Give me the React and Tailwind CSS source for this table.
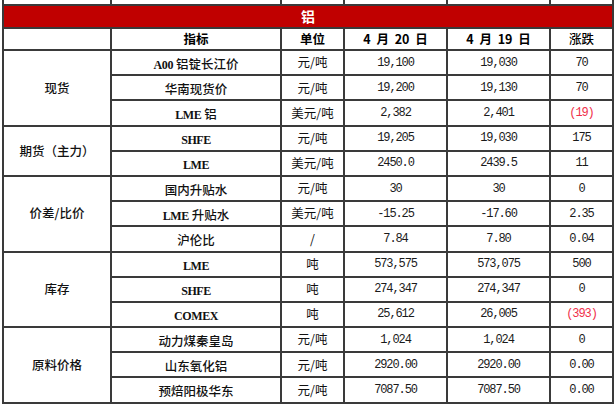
import React from "react";

const rows = [
  ["A00 铝锭长江价", "元/吨", "19,100", "19,030", "70"],
  ["华南现货价", "元/吨", "19,200", "19,130", "70"],
  ["LME 铝", "美元/吨", "2,382", "2,401", "(19)", true],
  ["SHFE", "元/吨", "19,205", "19,030", "175"],
  ["LME", "美元/吨", "2450.0", "2439.5", "11"],
  ["国内升贴水", "元/吨", "30", "30", "0"],
  ["LME 升贴水", "美元/吨", "-15.25", "-17.60", "2.35"],
  ["沪伦比", "/", "7.84", "7.80", "0.04"],
  ["LME", "吨", "573,575", "573,075", "500"],
  ["SHFE", "吨", "274,347", "274,347", "0"],
  ["COMEX", "吨", "25,612", "26,005", "(393)", true],
  ["动力煤秦皇岛", "元/吨", "1,024", "1,024", "0"],
  ["山东氧化铝", "元/吨", "2920.00", "2920.00", "0.00"],
  ["预焙阳极华东", "元/吨", "7087.50", "7087.50", "0.00"],
];

const cjk = "[font-family:'Noto_Sans_CJK_SC',sans-serif]";
const cell = "bg-white flex items-center justify-center overflow-hidden leading-none";
const groupCell = `${cell} ${cjk} font-medium text-[12.5px] text-[#111] col-start-1`;

function Mixed({ text }) {
  const parts = text.split(/([A-Za-z0-9]+)/).filter((p) => p !== "");
  return (
    <span className="whitespace-pre">
      {parts.map((p, i) =>
        /^[A-Za-z0-9]+$/.test(p) ? (
          <span key={i} className="[font-family:'Liberation_Serif',serif] font-bold text-[12px] tracking-[-0.4px]">
            {p}
          </span>
        ) : (
          <span key={i} className={`${cjk} font-medium text-[12.5px]`}>
            {p}
          </span>
        )
      )}
    </span>
  );
}

function Num({ v, red }) {
  return (
    <span
      className={`[font-family:'Liberation_Mono',monospace] text-[12px] tracking-[-1.1px] whitespace-pre ${
        red ? "text-[#f0304a]" : "text-[#1a1a1a]"
      }`}
    >
      {v}
    </span>
  );
}

export default function App() {
  return (
    <div className="w-[615px] h-[412px] bg-white overflow-hidden">
      <div className="ml-[2px] mt-[-17px] w-[612px] bg-[#3a3a3a] p-[2px] grid gap-[2px] grid-cols-[106px_168px_61px_101px_101px_61px] grid-rows-[19px_21px_20px_repeat(14,23.2px)]">
        {/* partial top row */}
        <div className="bg-white" />
        <div className="bg-white" />
        <div className="bg-white" />
        <div className="bg-white" />
        <div className="bg-white" />
        <div className="bg-white" />
        {/* red title */}
        <div className={`col-span-6 bg-[#c00000] flex items-center justify-center text-white font-bold text-[14px] ${cjk}`}>
          铝
        </div>
        {/* header row */}
        <div className={`${cell} col-start-1 row-start-3`} />
        <div className={`${cell} ${cjk} font-bold text-[12.5px]`}>指标</div>
        <div className={`${cell} ${cjk} font-bold text-[12.5px]`}>单位</div>
        <div className={`${cell} ${cjk} font-bold text-[12.5px] whitespace-pre [word-spacing:3px]`}>4 月 20 日</div>
        <div className={`${cell} ${cjk} font-bold text-[12.5px] whitespace-pre [word-spacing:3px]`}>4 月 19 日</div>
        <div className={`${cell} ${cjk} font-medium text-[12.5px]`}>涨跌</div>

        {/* group labels (column 1) */}
        <div className={`${groupCell} row-start-4 row-span-3`}>现货</div>
        <div className={`${groupCell} row-start-7 row-span-2`}>期货（主力）</div>
        <div className={`${groupCell} row-start-9 row-span-3`}>价差/比价</div>
        <div className={`${groupCell} row-start-12 row-span-3`}>库存</div>
        <div className={`${groupCell} row-start-15 row-span-3`}>原料价格</div>

        {rows.map((r, i) => (
          <React.Fragment key={i}>
            <div className={`${cell} text-[#111]`}>
              <Mixed text={r[0]} />
            </div>
            <div className={`${cell} ${cjk} text-[12.5px] text-[#111]`}>{r[1]}</div>
            <div className={cell}>
              <Num v={r[2]} />
            </div>
            <div className={cell}>
              <Num v={r[3]} />
            </div>
            <div className={cell}>
              <Num v={r[4]} red={r[5]} />
            </div>
          </React.Fragment>
        ))}
      </div>
    </div>
  );
}
